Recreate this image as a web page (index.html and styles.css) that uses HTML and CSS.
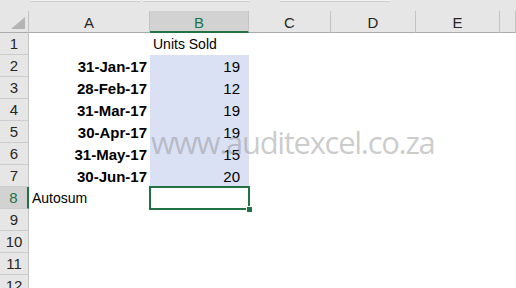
FILE: index.html
```html
<!DOCTYPE html>
<html lang="en">
  <head>
    <meta charset="UTF-8" />
    <title>Autosum</title>
    <link rel="stylesheet" href="styles.css">
  </head>
  <body>
    <!-- Formula bar edge -->
    <div class="topbar">
      <span class="box box-a"></span>
      <span class="box box-b"></span>
      <span class="box box-c"></span>
    </div>

    <div class="sheet-wrap">
      <div class="sheet">
        <!-- Column headers -->
        <div class="corner"><span class="tri"></span></div>
        <div class="col-head">A</div>
        <div class="col-head active">B</div>
        <div class="col-head">C</div>
        <div class="col-head">D</div>
        <div class="col-head">E</div>
        <div class="col-head"></div>

        <!-- Row 1 -->
        <div class="row-head">1</div>
        <div class="cell"></div>
        <div class="cell">Units Sold</div>
        <div class="cell"></div><div class="cell"></div><div class="cell"></div><div class="cell"></div>

        <div class="row-head">2</div>
        <div class="cell date">31-Jan-17</div>
        <div class="cell num sel">19</div>
        <div class="cell"></div><div class="cell"></div><div class="cell"></div><div class="cell"></div>

        <div class="row-head">3</div>
        <div class="cell date">28-Feb-17</div>
        <div class="cell num sel">12</div>
        <div class="cell"></div><div class="cell"></div><div class="cell"></div><div class="cell"></div>

        <div class="row-head">4</div>
        <div class="cell date">31-Mar-17</div>
        <div class="cell num sel">19</div>
        <div class="cell"></div><div class="cell"></div><div class="cell"></div><div class="cell"></div>

        <div class="row-head">5</div>
        <div class="cell date">30-Apr-17</div>
        <div class="cell num sel">19</div>
        <div class="cell"></div><div class="cell"></div><div class="cell"></div><div class="cell"></div>

        <div class="row-head">6</div>
        <div class="cell date">31-May-17</div>
        <div class="cell num sel">15</div>
        <div class="cell"></div><div class="cell"></div><div class="cell"></div><div class="cell"></div>

        <div class="row-head">7</div>
        <div class="cell date">30-Jun-17</div>
        <div class="cell num sel">20</div>
        <div class="cell"></div><div class="cell"></div><div class="cell"></div><div class="cell"></div>

        <div class="row-head active">8</div>
        <div class="cell">Autosum</div>
        <div class="cell current"></div>
        <div class="cell"></div><div class="cell"></div><div class="cell"></div><div class="cell"></div>

        <div class="row-head">9</div>
        <div class="cell"></div><div class="cell"></div><div class="cell"></div><div class="cell"></div><div class="cell"></div><div class="cell"></div>

        <div class="row-head">10</div>
        <div class="cell"></div><div class="cell"></div><div class="cell"></div><div class="cell"></div><div class="cell"></div><div class="cell"></div>

        <div class="row-head">11</div>
        <div class="cell"></div><div class="cell"></div><div class="cell"></div><div class="cell"></div><div class="cell"></div><div class="cell"></div>

        <div class="row-head">12</div>
        <div class="cell"></div><div class="cell"></div><div class="cell"></div><div class="cell"></div><div class="cell"></div><div class="cell"></div>
      </div>

      <!-- Watermark -->
      <div class="watermark">www.auditexcel.co.za</div>
    </div>
  </body>
</html>
```

FILE: styles.css
```css
* {
  margin: 0;
  box-sizing: border-box;
}

body {
  font-family: "Liberation Sans", Arial, sans-serif;
  font-size: 14px;
  color: #000;
  background: #fff;
  overflow: hidden;
}

/* Formula bar edge */
.topbar {
  height: 11px;
  background: #e6e6e6;
  position: relative;
}

.box {
  position: absolute;
  top: 0;
  height: 2px;
  background: #f3f3f3;
  border-bottom: 1px solid #cfcfcf;
}

.box-a { left: 30px; width: 110px; }
.box-b { left: 143px; width: 107px; }
.box-c { left: 280px; width: 110px; }

/* Grid */
.sheet-wrap {
  position: relative;
}

.sheet {
  display: grid;
  grid-template-columns: 29px 121px 99px 82px 85px 84px 1fr;
  grid-auto-rows: 22px;
}

.corner {
  background: #e6e6e6;
  border-right: 1px solid #c4c4c4;
  border-bottom: 1px solid #ababab;
  display: flex;
  justify-content: flex-end;
  align-items: flex-end;
  padding: 0 3px 3px 0;
}

.tri {
  width: 0;
  height: 0;
  border-left: 14px solid transparent;
  border-bottom: 12px solid #b4b4b4;
}

.col-head {
  background: #e6e6e6;
  border-right: 1px solid #c4c4c4;
  border-bottom: 1px solid #ababab;
  display: flex;
  justify-content: center;
  align-items: center;
  font-size: 15px;
  color: #262626;
  padding-top: 1px;
}

.col-head.active {
  background: #d2d2d2;
  color: #217346;
  border-bottom: 2px solid #217346;
  padding-top: 2px;
}

.row-head {
  background: #e6e6e6;
  border-right: 1px solid #c4c4c4;
  border-bottom: 1px solid #cccccc;
  display: flex;
  justify-content: center;
  align-items: center;
  font-size: 15px;
  color: #262626;
}

.row-head.active {
  background: #d2d2d2;
  color: #217346;
  border-right: 2px solid #217346;
}

.cell {
  display: flex;
  align-items: center;
  padding: 0 3px;
  white-space: nowrap;
}

.date {
  justify-content: flex-end;
  font-weight: bold;
  font-size: 15px;
}

.num {
  justify-content: flex-end;
  padding-right: 9px;
  font-size: 15px;
}

.sel {
  background: #dbe1f4;
}

.current {
  position: relative;
  outline: 2px solid #217346;
  outline-offset: -1px;
}

.current::after {
  content: "";
  position: absolute;
  right: -3px;
  bottom: -3px;
  width: 5px;
  height: 5px;
  background: #217346;
  border: 1px solid #fff;
  border-width: 1px 0 0 1px;
}

/* Watermark */
.watermark {
  position: absolute;
  left: 151px;
  top: 111px;
  font-family: "Open Sans", sans-serif;
  font-size: 31px;
  letter-spacing: -1.3px;
  line-height: 40px;
  color: rgba(140, 140, 140, 0.45);
  pointer-events: none;
  white-space: nowrap;
}
```
